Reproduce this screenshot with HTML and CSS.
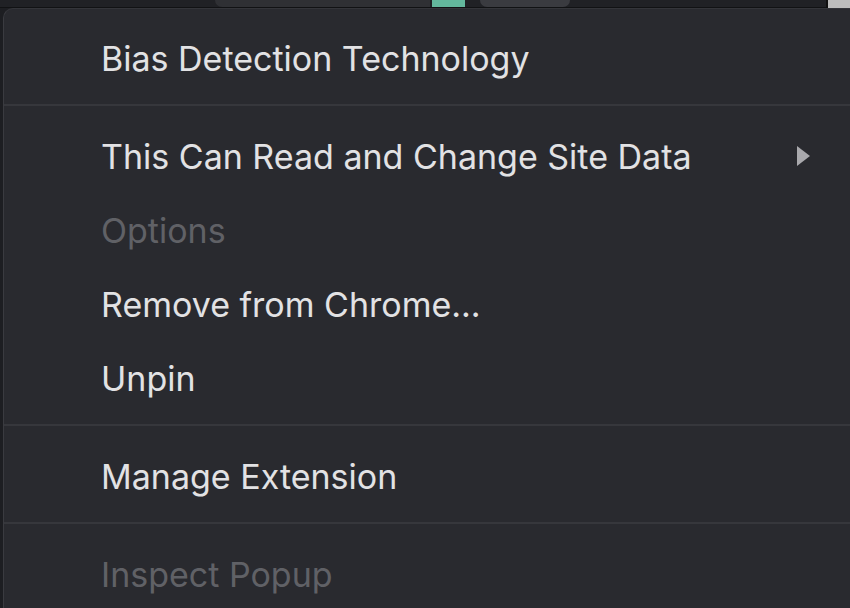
FILE: index.html
```html
<!DOCTYPE html>
<html lang="en">
<head>
    <meta charset="UTF-8">
    <title>Extension Menu</title>
    <link rel="stylesheet" href="styles.css">
</head>
<body>
    <!-- Toolbar peeking out above the menu -->
    <div class="toolbar">
        <span class="tb-shape tb-left"></span>
        <span class="tb-green"></span>
        <span class="tb-shape tb-mid"></span>
        <span class="tb-corner"></span>
    </div>

    <div class="menu">
        <div class="item">Bias Detection Technology</div>
        <div class="sep"></div>
        <div class="item">
            <span>This Can Read and Change Site Data</span>
            <span class="arrow"></span>
        </div>
        <div class="item disabled">Options</div>
        <div class="item">Remove from Chrome...</div>
        <div class="item">Unpin</div>
        <div class="sep"></div>
        <div class="item">Manage Extension</div>
        <div class="sep"></div>
        <div class="item disabled">Inspect Popup</div>
    </div>
</body>
</html>
```

FILE: styles.css
```css
* {
    margin: 0;
    padding: 0;
    box-sizing: border-box;
}

body {
    width: 850px;
    height: 608px;
    overflow: hidden;
    background-color: #1d1e22;
    font-family: Inter, "Noto Sans", sans-serif;
}

/* Top strip */
.toolbar {
    position: relative;
    height: 8px;
    background-color: #202125;
    border-bottom: 1px solid #111214;
}

.tb-shape {
    position: absolute;
    top: 0;
    height: 7px;
    background-color: #2f3034;
}

.tb-left {
    left: 215px;
    width: 215px;
    border-radius: 0 0 0 40px;
}

.tb-mid {
    left: 480px;
    width: 90px;
    background-color: #3a3b40;
    border-radius: 0 0 40px 40px;
}

.tb-green {
    position: absolute;
    top: 0;
    left: 432px;
    width: 33px;
    height: 7px;
    background-color: #63b89d;
}

.tb-corner {
    position: absolute;
    top: 0;
    right: 0;
    width: 24px;
    height: 8px;
    background-color: #bdbdbd;
    border-left: 2px solid #101010;
}

/* Menu */
.menu {
    margin-left: 3px;
    height: 600px;
    padding-top: 12px;
    background-color: #292a2f;
    border-left: 1px solid #3a3b40;
    border-top: 1px solid #34353a;
    border-top-left-radius: 10px;
}

.item {
    display: flex;
    align-items: center;
    justify-content: space-between;
    height: 74px;
    padding-left: 97px;
    padding-right: 40px;
    font-size: 34px;
    color: #e2e2e4;
}

.item.disabled {
    color: #606166;
}

.sep {
    height: 2px;
    margin: 9px 0 13px;
    background-color: #36373c;
}

.arrow {
    width: 0;
    height: 0;
    border-top: 10px solid transparent;
    border-bottom: 10px solid transparent;
    border-left: 13px solid #a9a9ad;
}
```
